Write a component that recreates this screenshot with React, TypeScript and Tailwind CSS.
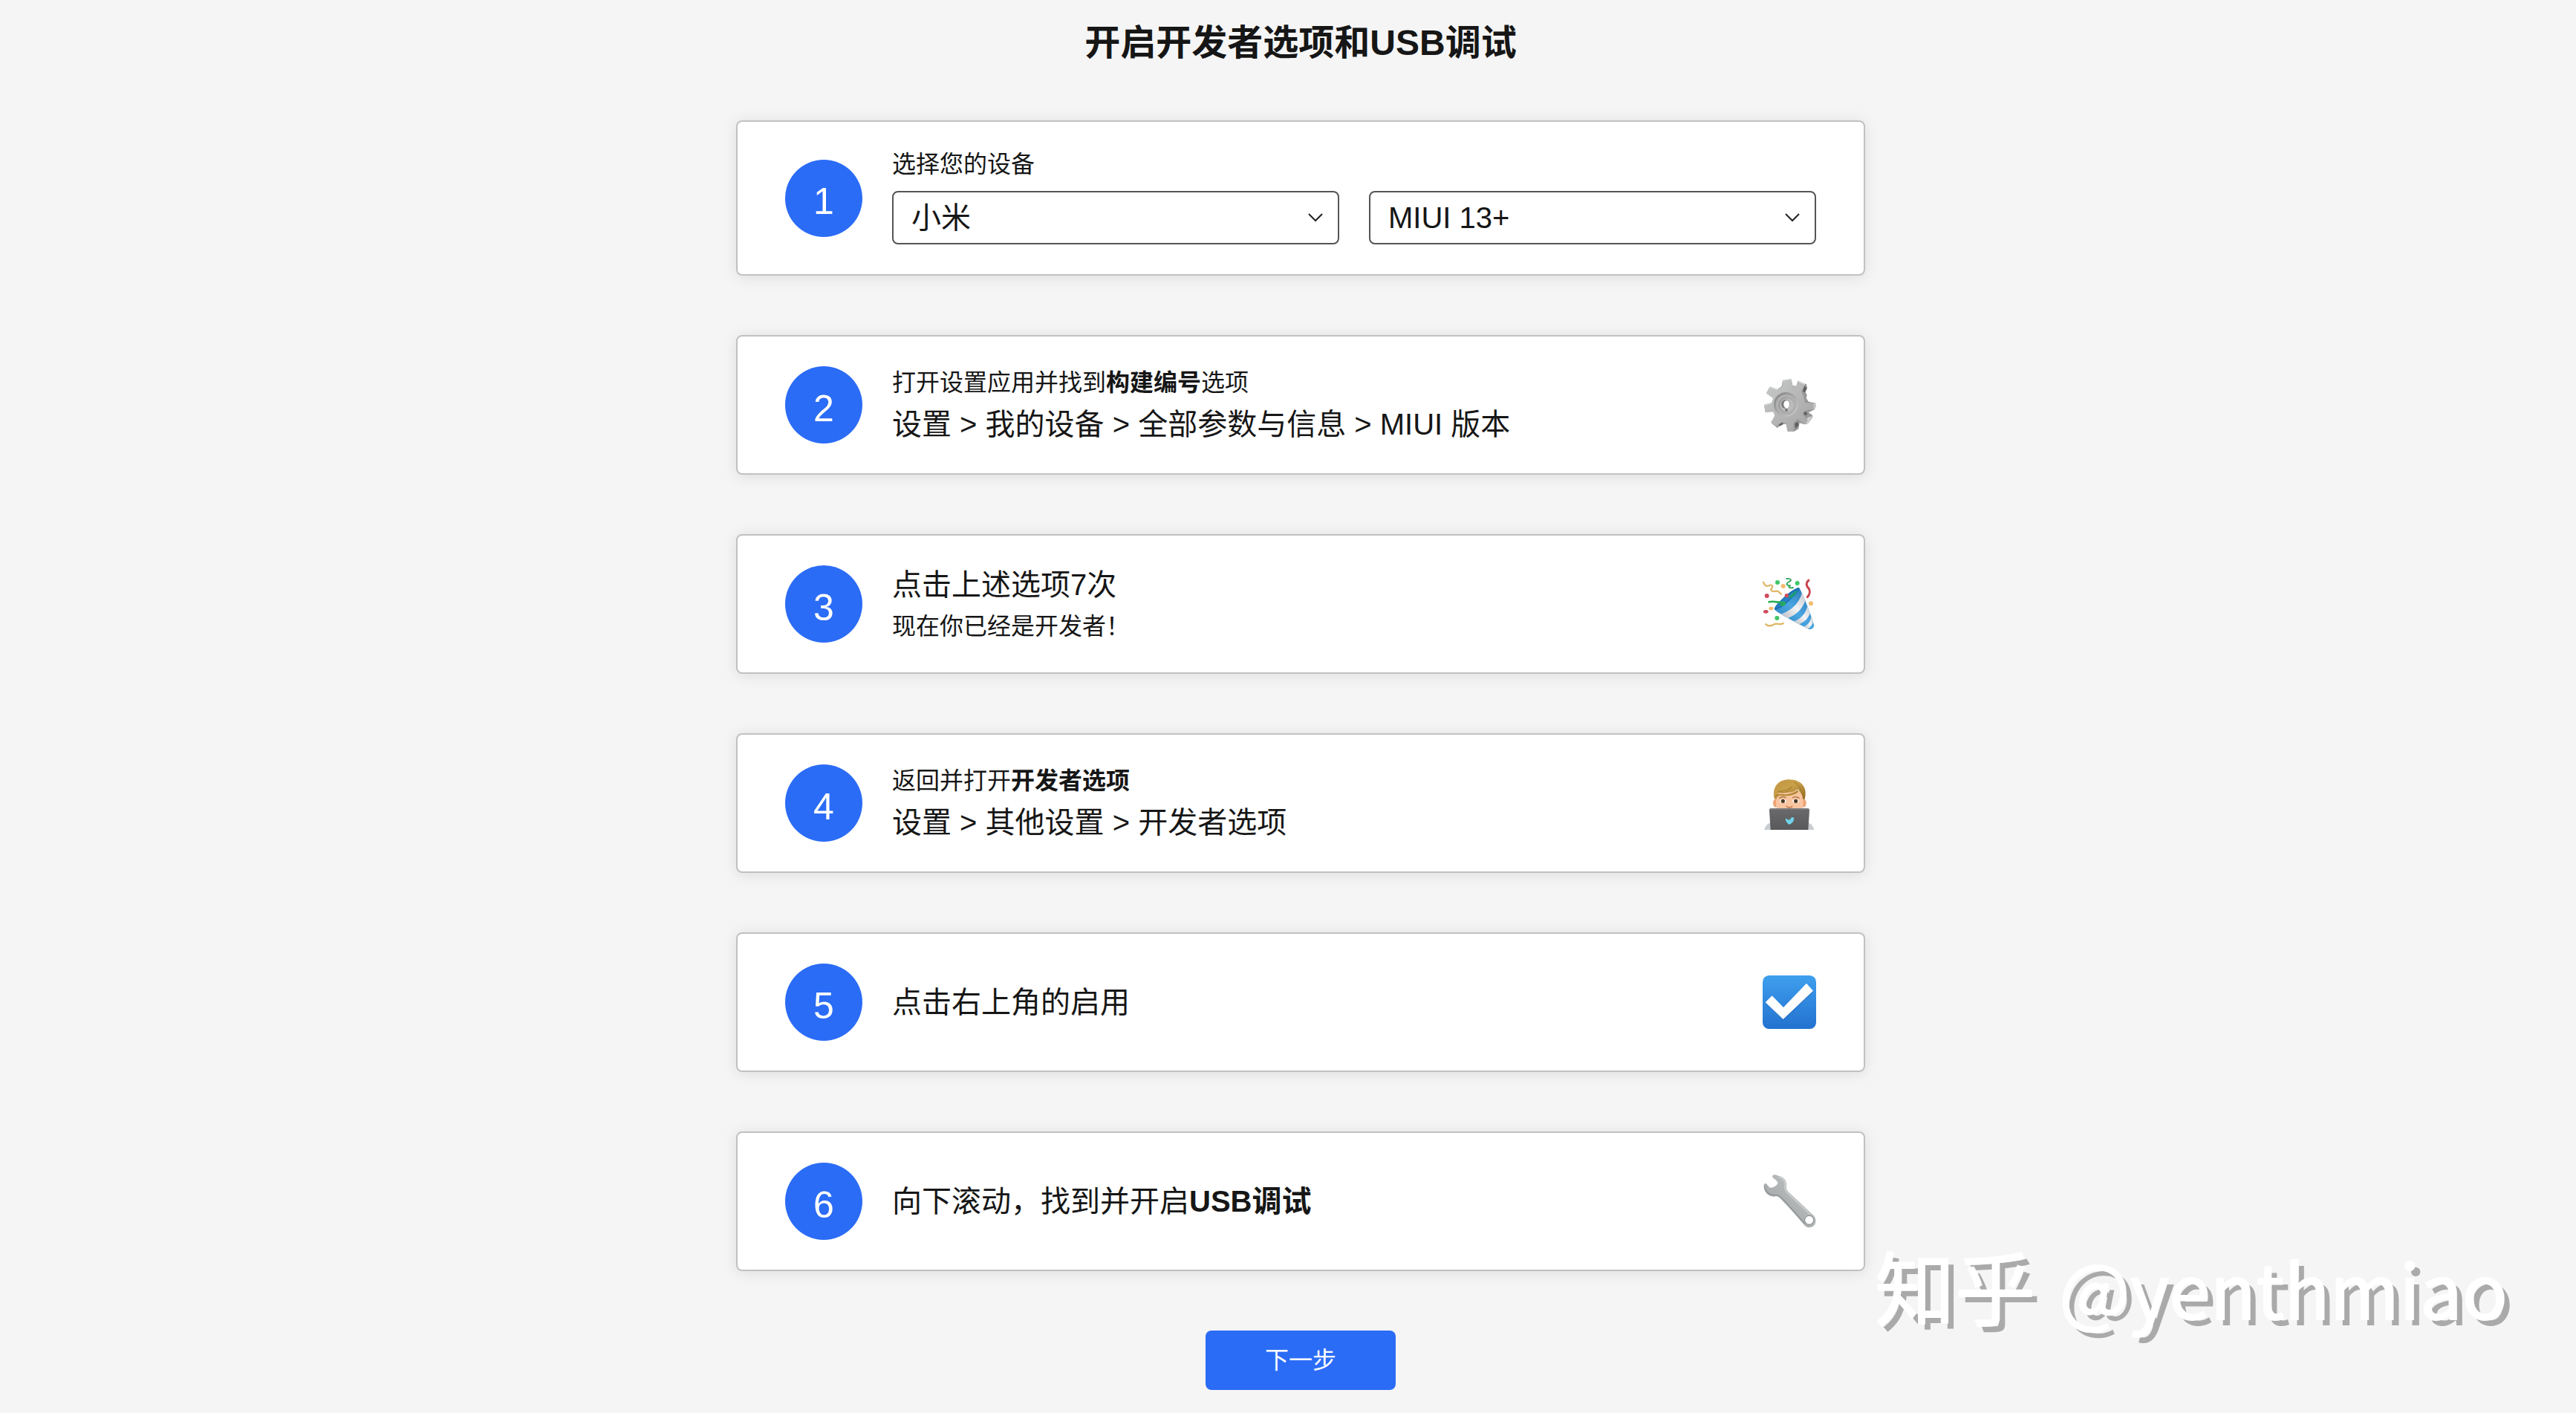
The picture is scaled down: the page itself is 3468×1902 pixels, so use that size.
import React, { useState } from 'react';

interface StepProps {
  index: number;
  icon?: React.ReactNode;
  children: React.ReactNode;
}

interface PickerProps {
  id: string;
  label?: string;
  options: string[];
  value: string;
  onChange: (value: string) => void;
}

const DEVICES: Record<string, string[]> = {
  小米: ['MIUI 13+', 'MIUI 12'],
  华为: ['HarmonyOS', 'EMUI'],
};

const GearIcon = () => (
  <svg viewBox="69 57 216 216" className="size-[72px] shrink-0" aria-hidden="true">
    <defs>
      <linearGradient id="gearFace" x1="0" y1="0" x2="1" y2="1">
        <stop offset="0" stopColor="#c8caca" />
        <stop offset="0.5" stopColor="#b6b6b7" />
        <stop offset="1" stopColor="#a3a3a4" />
      </linearGradient>
      <linearGradient id="gearDish" x1="0" y1="0" x2="1" y2="1">
        <stop offset="0" stopColor="#7e7e7f" />
        <stop offset="1" stopColor="#d3d3d3" />
      </linearGradient>
    </defs>
    <path d="M150 66L184 61L190 86L204 90L212 68L246 82L249 96L242 112L248 126L245 138L255 152L283 158L284 171L278 184L254 196L270 206L271 214L252 241L238 244L218 238L214 262L196 272L170 272L164 244L148 240L128 258L106 240L120 208L112 192L80 195L75 165L106 156L112 138L84 118L98 92L130 102L146 90Z" fill="#979798" />
    <path d="M238 88L248 98L240 114L230 110ZM234 196L244 192L250 204L240 208ZM198 240L212 234L214 248L202 260ZM136 242L148 237L154 242L136 252Z" fill="#606061" />
    <path d="M260 162L283 160L280 180L262 184ZM250 216L270 210L252 240L240 240Z" fill="#cfcfcf" />
    <path d="M150 66L184 61L190 88L202 94L214 70L240 82L226 112L234 130L240 156L276 158L275 180L238 190L230 202L252 228L238 244L210 222L196 236L194 268L170 272L164 240L146 234L124 252L102 236L118 208L110 190L80 195L75 165L106 158L112 138L84 118L98 92L130 104L148 92Z" fill="url(#gearFace)" />
    <circle cx="163" cy="163" r="49" fill="url(#gearDish)" />
    <circle cx="164" cy="165" r="42" fill="#b0b0b1" />
    <circle cx="164" cy="165" r="31" fill="#999" />
    <circle cx="167" cy="166" r="28" fill="#bcbcbd" />
    <circle cx="162" cy="162" r="18" fill="#7b7b7c" />
    <ellipse cx="166" cy="163" rx="12" ry="16" fill="#fff" />
    <circle cx="165" cy="186" r="5" fill="#6a6a6b" />
    <path d="M150 66L184 61M98 92L130 104M75 165L106 158M214 70L240 82" stroke="#d9dada" strokeWidth="4" fill="none" />
  </svg>
);

const PartyIcon = () => (
  <svg viewBox="69 66 216 216" className="size-[72px] shrink-0" aria-hidden="true">
    <defs>
      <linearGradient id="coneBlue" x1="0" y1="1" x2="1" y2="0">
        <stop offset="0" stopColor="#1b6fae" />
        <stop offset="0.5" stopColor="#4aa6e2" />
        <stop offset="1" stopColor="#17639f" />
      </linearGradient>
      <linearGradient id="coneWhite" x1="0" y1="1" x2="1" y2="0">
        <stop offset="0" stopColor="#b9bcc2" />
        <stop offset="0.5" stopColor="#f3f4f6" />
        <stop offset="1" stopColor="#c2c6cc" />
      </linearGradient>
      <clipPath id="coneShape">
        <path d="M116 196C112 180 196 104 216 108C224 116 266 220 276 258C278 270 268 278 256 276C220 258 130 212 116 196Z" />
      </clipPath>
    </defs>
    <g clipPath="url(#coneShape)">
      <rect x="100" y="100" width="190" height="190" fill="url(#coneBlue)" />
      <path d="M144 214C186 202 222 164 228 126L242 156C234 190 206 218 170 232Z" fill="url(#coneWhite)" />
      <path d="M194 244C226 234 248 206 250 176L262 204C258 228 240 246 216 256Z" fill="url(#coneWhite)" />
      <path d="M234 266C252 260 264 244 266 220L274 242C270 258 262 268 250 276Z" fill="url(#coneWhite)" />
    </g>
    <path d="M117 196C116 178 196 104 217 110C222 122 140 204 117 196Z" fill="#1a6fb4" />
    <path d="M122 190C128 170 190 120 210 116C206 136 146 188 122 190Z" fill="#2680c2" />
    <path d="M170 146C184 136 200 122 210 118C206 132 196 144 184 150Z" fill="#1d9b78" />
    <g fill="none" strokeLinecap="round" strokeLinejoin="round">
      <path d="M95 166C114 160 132 170 156 168C162 174 152 180 144 178" stroke="#27ae53" strokeWidth="8" />
      <path d="M166 72C184 70 188 78 176 84C162 92 164 98 180 100C170 108 176 110 192 108" stroke="#34a75c" strokeWidth="6" />
      <path d="M255 78C240 92 248 104 256 112C262 124 258 138 250 146" stroke="#c8434b" strokeWidth="9" />
      <path d="M72 86C78 104 88 104 98 98C110 96 112 104 102 116C108 128 118 122 128 122C138 124 138 132 144 134" stroke="#e0b96c" strokeWidth="7" />
      <path d="M82 256C94 268 106 262 116 256C126 248 138 262 152 252" stroke="#dfb566" strokeWidth="7" />
    </g>
    <g fill="#3fc766">
      <circle cx="129" cy="87" r="9" />
      <circle cx="209" cy="90" r="9" />
      <circle cx="127" cy="231" r="9" />
    </g>
    <g fill="#f3bb6d">
      <circle cx="152" cy="102" r="9" />
      <circle cx="264" cy="172" r="9" />
      <ellipse cx="103" cy="192" rx="9" ry="7" />
    </g>
    <g fill="#d14b5b">
      <circle cx="86" cy="141" r="9" />
      <ellipse cx="82" cy="205" rx="10" ry="7" />
      <circle cx="166" cy="140" r="8" />
    </g>
  </svg>
);

const DeveloperIcon = () => (
  <svg viewBox="69 60 216 216" className="size-[72px] shrink-0" aria-hidden="true">
    <defs>
      <linearGradient id="hair" x1="0" y1="0" x2="1" y2="1">
        <stop offset="0" stopColor="#c0953f" />
        <stop offset="0.45" stopColor="#c9a04a" />
        <stop offset="1" stopColor="#93691f" />
      </linearGradient>
      <linearGradient id="laptop" x1="0" y1="0" x2="0" y2="1">
        <stop offset="0" stopColor="#6a6a6c" />
        <stop offset="1" stopColor="#59595b" />
      </linearGradient>
    </defs>
    <path d="M76 276C80 258 92 248 110 244H244C262 248 272 258 277 276Z" fill="#c9ccd0" />
    <ellipse cx="121" cy="168" rx="10" ry="17" fill="#eda476" />
    <ellipse cx="235" cy="168" rx="10" ry="17" fill="#eda476" />
    <path d="M123 120H233V168C233 204 208 220 178 220C148 220 123 204 123 168Z" fill="#f8c5a0" />
    <path d="M116 150C106 104 132 73 176 73C226 73 252 106 239 152H231C231 136 222 124 210 112C184 134 150 122 133 128C126 134 125 142 124 152Z" fill="url(#hair)" />
    <path d="M118 142C122 128 134 132 150 132C172 134 196 128 210 114L214 122C196 138 170 140 144 138C132 138 126 142 124 152Z" fill="#b58a37" />
    <path d="M130 122C150 120 170 116 186 102C180 116 168 124 150 126ZM196 84C214 92 222 106 222 118" fill="none" stroke="#a47a2c" strokeWidth="3" />
    <path d="M137 148C144 142 154 142 162 146M191 146C199 142 209 142 216 148" fill="none" stroke="#a06c33" strokeWidth="4" strokeLinecap="round" />
    <ellipse cx="151" cy="160" rx="13" ry="8" fill="#fff" />
    <ellipse cx="203" cy="160" rx="13" ry="8" fill="#fff" />
    <circle cx="151" cy="160" r="8" fill="#4b3a25" />
    <circle cx="203" cy="160" r="8" fill="#4b3a25" />
    <path d="M166 181C172 188 182 188 188 181" fill="none" stroke="#c98257" strokeWidth="5" strokeLinecap="round" />
    <path d="M104 189H250C255 189 258 192 258 197L253 276H101L96 197C96 192 99 189 104 189Z" fill="url(#laptop)" />
    <path d="M97 192H257" stroke="#8b8b8d" strokeWidth="3" />
    <path d="M175 255C167 248 160 240 162 229C168 235 174 236 180 235C182 226 190 222 195 227C197 238 190 250 175 255Z" fill="#6fd3ea" />
  </svg>
);

const CheckIcon = () => (
  <svg viewBox="69 54 216 216" className="size-[72px] shrink-0" aria-hidden="true">
    <defs>
      <linearGradient id="checkBox" x1="0" y1="0" x2="0" y2="1">
        <stop offset="0" stopColor="#3f9fee" />
        <stop offset="1" stopColor="#2272cf" />
      </linearGradient>
    </defs>
    <rect x="69" y="54" width="216" height="216" rx="26" fill="url(#checkBox)" />
    <path d="M80 166L107 139L154 184L247 89L274 120L154 235Z" fill="#1c5fb0" opacity="0.5" />
    <path d="M80 163L107 136L153 183L246 86L273 116L152 231Z" fill="#fff" />
  </svg>
);

const WrenchIcon = () => (
  <svg viewBox="69 63 216 216" className="size-[72px] shrink-0" aria-hidden="true">
    <defs>
      <linearGradient id="steel" x1="0" y1="1" x2="1" y2="0">
        <stop offset="0" stopColor="#999c9e" />
        <stop offset="0.5" stopColor="#b0b3b4" />
        <stop offset="1" stopColor="#c9cbcc" />
      </linearGradient>
    </defs>
    <path
      fillRule="evenodd"
      d="M110 66C116 62 124 64 132 68C154 72 168 88 165 110C163 120 166 126 174 134L268 222C282 232 288 250 280 264C272 278 252 282 240 270C214 240 184 204 148 168C136 152 128 148 116 152C94 154 76 136 74 112C72 104 76 98 83 99L98 116C110 118 124 110 130 100C130 90 120 82 112 78C108 74 108 70 110 66ZM257 230A17 17 0 1 0 257 264A17 17 0 1 0 257 230Z"
      fill="url(#steel)"
    />
    <path d="M76 112C80 134 98 148 118 146C132 144 142 152 154 166L240 262" fill="none" stroke="#8d9092" strokeWidth="4" />
    <path d="M134 72C154 80 164 94 159 114C158 124 164 132 172 140L262 224" fill="none" stroke="#d2d4d5" strokeWidth="4" />
    <circle cx="257" cy="247" r="18" fill="none" stroke="#8b8e90" strokeWidth="3" />
  </svg>
);

const Step: React.FC<StepProps> = ({ index, icon, children }) => (
  <li className="flex items-center gap-10 rounded-lg border-2 border-[#c1c1c1] bg-white px-16 py-10 shadow-[0_2px_20px_rgba(0,0,0,0.1)]">
    <span className="flex size-[104px] shrink-0 items-center justify-center rounded-full bg-[#2b6cf6] pt-[10px] text-[50px] text-white">
      {index}
    </span>
    <div className="flex flex-1 flex-col gap-5">{children}</div>
    {icon}
  </li>
);

const Small: React.FC<{ children: React.ReactNode }> = ({ children }) => (
  <p className="text-[32px] leading-none">{children}</p>
);

const Large: React.FC<{ children: React.ReactNode }> = ({ children }) => (
  <p className="text-[40px] leading-none">{children}</p>
);

const Picker: React.FC<PickerProps> = ({ id, label, options, value, onChange }) => (
  <div className="relative flex-1">
    <select
      id={id}
      aria-label={label}
      value={value}
      onChange={(e) => onChange(e.target.value)}
      className="h-[72px] w-full appearance-none rounded-lg border-2 border-[#555] bg-white px-6 text-[40px] leading-none"
    >
      {options.map((option) => (
        <option key={option}>{option}</option>
      ))}
    </select>
    <svg viewBox="0 0 20 12" className="pointer-events-none absolute top-[30px] right-[22px] h-3 w-5" aria-hidden="true">
      <path d="M1 1L10 10L19 1" fill="none" stroke="#222" strokeWidth="2" />
    </svg>
  </div>
);

const App: React.FC = () => {
  const [device, setDevice] = useState('小米');
  const [version, setVersion] = useState('MIUI 13+');

  const changeDevice = (next: string) => {
    setDevice(next);
    setVersion(DEVICES[next][0]);
  };

  return (
    <div className="relative flex min-h-screen flex-col items-center bg-[#f5f5f5] pt-[34px] pb-8 pl-[34px] font-['Liberation_Sans','Noto_Sans_CJK_SC',sans-serif] text-[#161616]">
      <h1 className="text-5xl leading-none font-bold">开启开发者选项和USB调试</h1>

      <ol className="mt-20 flex w-full max-w-[1520px] flex-col gap-20">
        <Step index={1}>
          <label htmlFor="device" className="pt-px text-[32px] leading-none">选择您的设备</label>
          <div className="flex gap-10">
            <Picker id="device" options={Object.keys(DEVICES)} value={device} onChange={changeDevice} />
            <Picker id="version" label="系统版本" options={DEVICES[device]} value={version} onChange={setVersion} />
          </div>
        </Step>
        <Step index={2} icon={<GearIcon />}>
          <Small>打开设置应用并找到<b>构建编号</b>选项</Small>
          <Large>设置 &gt; 我的设备 &gt; 全部参数与信息 &gt; MIUI 版本</Large>
        </Step>
        <Step index={3} icon={<PartyIcon />}>
          <Large>点击上述选项7次</Large>
          <Small>现在你已经是开发者！</Small>
        </Step>
        <Step index={4} icon={<DeveloperIcon />}>
          <Small>返回并打开<b>开发者选项</b></Small>
          <Large>设置 &gt; 其他设置 &gt; 开发者选项</Large>
        </Step>
        <Step index={5} icon={<CheckIcon />}>
          <Large>点击右上角的启用</Large>
        </Step>
        <Step index={6} icon={<WrenchIcon />}>
          <Large>向下滚动，找到并开启<b>USB调试</b></Large>
        </Step>
      </ol>

      <button type="button" className="mt-20 h-20 rounded-lg bg-[#2b6cf6] px-20 text-[32px] leading-none text-white">
        下一步
      </button>

      <p className="pointer-events-none absolute right-[92px] bottom-[120px] flex items-baseline gap-8 font-['Noto_Sans_CJK_SC',sans-serif] text-[101px] leading-none whitespace-nowrap text-white [-webkit-text-stroke:2px_white] [text-shadow:8px_8px_0_#aaa]">
        <span className="text-[108px]">知乎</span>
        <span>@yenthmiao</span>
      </p>
    </div>
  );
};

export default App;
